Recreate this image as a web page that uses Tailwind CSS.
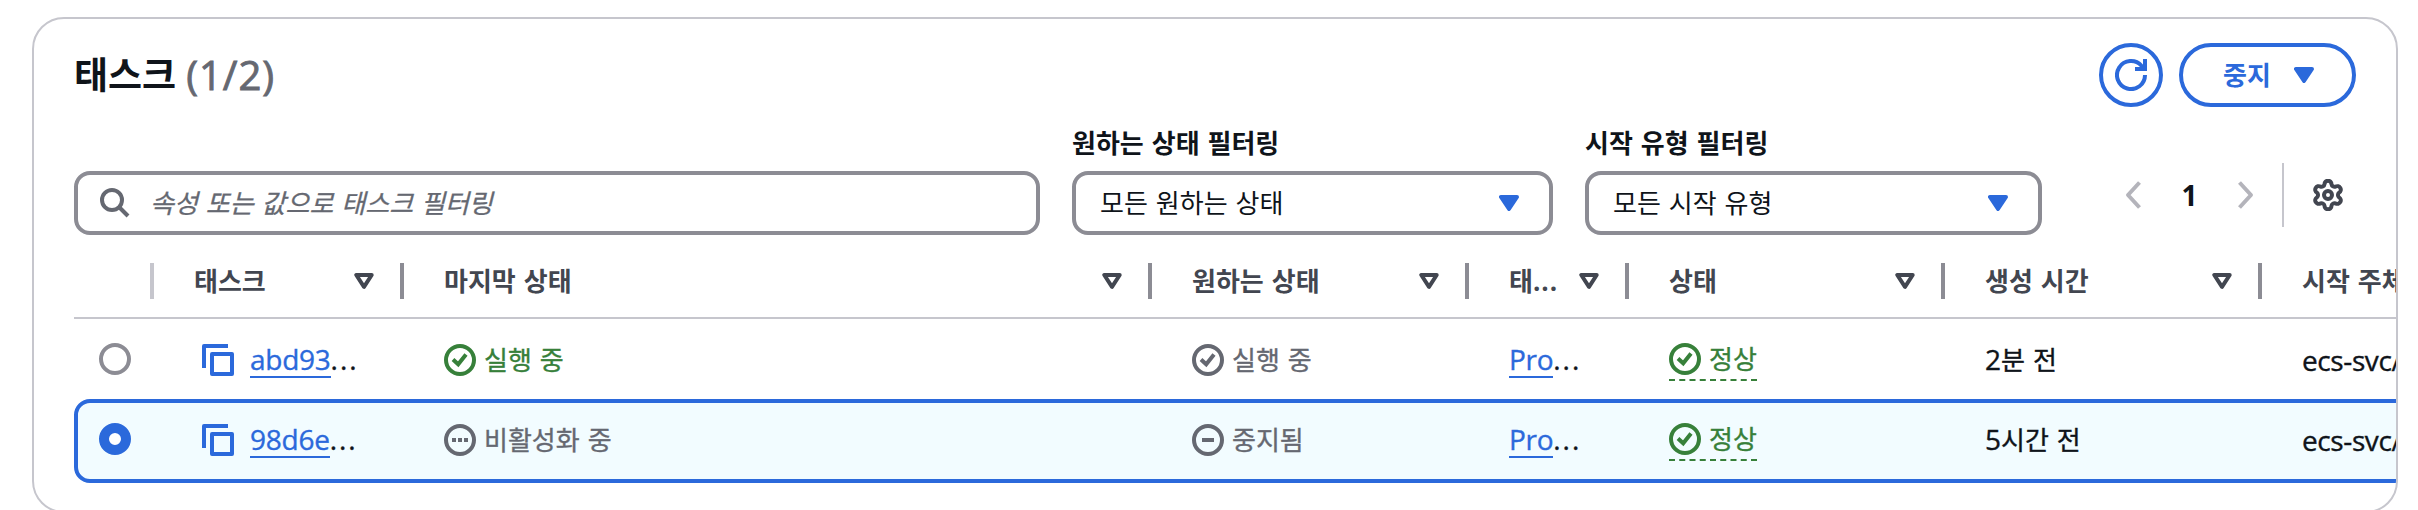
<!DOCTYPE html>
<html lang="ko">
<head>
<meta charset="utf-8">
<title>태스크</title>
<script src="https://cdn.jsdelivr.net/npm/@tailwindcss/browser@4"></script>
</head>
<body class="h-[510px] w-[2418px] overflow-hidden bg-white font-['Open_Sans','Noto_Sans_CJK_KR',sans-serif] text-[26px] leading-8 text-[#0f141a] [word-spacing:1.200px]">
<svg class="hidden">
  <symbol id="check" viewBox="0 0 32 32"><circle cx="16" cy="16" r="14" fill="none" stroke="currentColor" stroke-width="4"/><path d="M9 15.500l5.200 4.800 7.800-9.800" fill="none" stroke="currentColor" stroke-width="4"/></symbol>
  <symbol id="minus" viewBox="0 0 32 32"><circle cx="16" cy="16" r="14" fill="none" stroke="currentColor" stroke-width="4"/><path d="M10 16h12" stroke="currentColor" stroke-width="4"/></symbol>
  <symbol id="dots" viewBox="0 0 32 32"><circle cx="16" cy="16" r="14" fill="none" stroke="currentColor" stroke-width="4"/><path d="M8 14h4v4H8zM14 14h4v4h-4zM20 14h4v4h-4z" fill="currentColor"/></symbol>
  <symbol id="copy" viewBox="0 0 32 32"><path d="M2 24V2h24" fill="none" stroke="currentColor" stroke-width="4" stroke-linejoin="round"/><path d="M10 10h20v20H10z" fill="none" stroke="currentColor" stroke-width="4" stroke-linejoin="round"/></symbol>
  <symbol id="caret" viewBox="0 0 20 16"><path d="M2 2h16l-8 12z" fill="currentColor" stroke="currentColor" stroke-width="4" stroke-linejoin="round"/></symbol>
  <symbol id="sort" viewBox="0 0 20 16"><path d="M2.300 2h15.400L10 13.800z" fill="none" stroke="currentColor" stroke-width="4" stroke-linejoin="round"/></symbol>
</svg>
<main class="mt-[17px] ml-8 h-[496px] w-[2366px] overflow-hidden rounded-[32px] border-2 border-[#c6c6cd] pl-10">
  <header class="flex h-[112px] items-start justify-between pt-6 pr-10">
    <h2 class="flex h-16 items-center gap-[10px] text-[40px] text-[#656871]"><span class="text-[37px] font-bold text-[#0f141a]">태스크</span><span class="tracking-[1px] [-webkit-text-stroke:0.900px]">(1/2)</span></h2>
    <div class="flex gap-4 text-[#2b69db]">
      <button class="flex size-16 items-center justify-center rounded-full border-4 border-current">
        <svg class="size-8" viewBox="0 0 32 32" fill="none" stroke="currentColor" stroke-width="4"><path d="M30 16a14 14 0 1 1-3.500-9.200l3 3.200"/><path d="M30 0v10H20"/></svg>
      </button>
      <button class="flex h-16 w-[177px] items-center rounded-full border-4 border-current pl-[40px] font-bold"><span class="w-[71px] text-left">중지</span><svg class="h-4 w-5"><use href="#caret"/></svg></button>
    </div>
  </header>

  <div class="flex h-[121px] items-start pr-10">
    <div class="mt-10 flex h-16 w-[966px] items-center rounded-2xl border-4 border-[#8c8c94] pl-[22px] text-[#656871]">
      <svg class="h-[30px] w-[30px]" viewBox="0 0 30 30" fill="none" stroke="currentColor" stroke-width="4"><circle cx="12" cy="12" r="10"/><path d="M19 19l9 9"/></svg>
      <span class="ml-5 italic [-webkit-text-stroke:0.300px]">속성 또는 값으로 태스크 필터링</span>
    </div>
    <div class="ml-8 w-[481px]">
      <div class="-mt-1 mb-3 font-bold">원하는 상태 필터링</div>
      <div class="flex h-16 items-center justify-between rounded-2xl border-4 border-[#8c8c94] pr-[30px] pl-6"><span>모든 원하는 상태</span><svg class="h-4 w-5 text-[#2b69db]"><use href="#caret"/></svg></div>
    </div>
    <div class="ml-8 w-[457px]">
      <div class="-mt-1 mb-3 font-bold">시작 유형 필터링</div>
      <div class="flex h-16 items-center justify-between rounded-2xl border-4 border-[#8c8c94] pr-[30px] pl-6"><span>모든 시작 유형</span><svg class="h-4 w-5 text-[#2b69db]"><use href="#caret"/></svg></div>
    </div>
    <div class="mt-8 ml-[83px] flex h-16 items-center">
      <svg class="h-7 w-4 text-[#b4b4bb]" viewBox="0 0 16 28" fill="none" stroke="currentColor" stroke-width="4"><path d="M14.500 1.500L3 14l11.500 12.500" stroke-linejoin="round"/></svg>
      <span class="w-[97px] text-center text-[28px] font-bold">1</span>
      <svg class="h-7 w-4 text-[#b4b4bb]" viewBox="0 0 16 28" fill="none" stroke="currentColor" stroke-width="4"><path d="M1.500 1.500L13 14 1.500 26.500" stroke-linejoin="round"/></svg>
      <span class="ml-7 h-16 w-0.5 bg-[#c6c6cd]"></span>
      <svg class="ml-7 size-8 text-[#424650]" viewBox="0 0 32 32" fill="none" stroke="currentColor" stroke-width="4" stroke-linejoin="round"><circle cx="16" cy="16" r="4"/><path d="M12.500 5.200A3.500 3.500 0 0 1 19.500 5.200A3 3 0 0 0 23.600 7.570A3.500 3.500 0 0 1 27.100 13.630A3 3 0 0 0 27.100 18.370A3.500 3.500 0 0 1 23.600 24.430A3 3 0 0 0 19.500 26.800A3.500 3.500 0 0 1 12.500 26.800A3 3 0 0 0 8.400 24.430A3.500 3.500 0 0 1 4.900 18.370A3 3 0 0 0 4.900 13.630A3.500 3.500 0 0 1 8.400 7.570A3 3 0 0 0 12.500 5.200z"/></svg>
    </div>
  </div>

  <div class="w-[2360px]">
    <div class="grid h-[67px] grid-cols-[80px_250px_748px_317px_160px_316px_317px_172px] items-start border-b-2 border-[#c6c6cd] pt-[11px] font-bold text-[#424650]">
      <div class="h-9 border-r-4 border-[#c6c6cd]"></div>
      <div class="flex h-9 items-center justify-between border-r-4 border-[#8c8c94] pr-[26px] pl-10"><span>태스크</span><svg class="h-4 w-5"><use href="#sort"/></svg></div>
      <div class="flex h-9 items-center justify-between border-r-4 border-[#8c8c94] pr-[26px] pl-10"><span>마지막 상태</span><svg class="h-4 w-5"><use href="#sort"/></svg></div>
      <div class="flex h-9 items-center justify-between border-r-4 border-[#8c8c94] pr-[26px] pl-10"><span>원하는 상태</span><svg class="h-4 w-5"><use href="#sort"/></svg></div>
      <div class="flex h-9 items-center justify-between border-r-4 border-[#8c8c94] pr-[26px] pl-10"><span>태<span class="tracking-[1px]">...</span></span><svg class="h-4 w-5"><use href="#sort"/></svg></div>
      <div class="flex h-9 items-center justify-between border-r-4 border-[#8c8c94] pr-[26px] pl-10"><span>상태</span><svg class="h-4 w-5"><use href="#sort"/></svg></div>
      <div class="flex h-9 items-center justify-between border-r-4 border-[#8c8c94] pr-[26px] pl-10"><span>생성 시간</span><svg class="h-4 w-5"><use href="#sort"/></svg></div>
      <div class="flex h-9 items-center pl-10 whitespace-nowrap"><span>시작 주체</span></div>
    </div>

    <div class="grid h-20 grid-cols-[80px_250px_748px_317px_160px_316px_317px_172px] items-center [-webkit-text-stroke:0.350px]">
      <div class="pl-[25px]"><div class="size-8 rounded-full border-4 border-[#8c8c94] bg-white"></div></div>
      <div class="flex items-center pt-0.5 pl-12 text-[28px]"><svg class="mr-4 size-8 text-[#2b69db]"><use href="#copy"/></svg><span class="h-[35px] border-b-2 border-[#2b69db] tracking-[-0.250px] text-[#2b69db]">abd93</span><span class="h-[35px] tracking-[2px]">...</span></div>
      <div class="flex items-center gap-2 pt-0.5 pl-10 text-[#37803a]"><svg class="size-8"><use href="#check"/></svg>실행 중</div>
      <div class="flex items-center gap-2 pt-0.5 pl-10 text-[#656871]"><svg class="size-8"><use href="#check"/></svg>실행 중</div>
      <div class="flex pt-0.5 pl-10 text-[28px]"><span class="h-[35px] border-b-2 border-[#2b69db] tracking-[-0.300px] text-[#2b69db]">Pro</span><span class="tracking-[2px]">...</span></div>
      <div class="pl-10"><div class="mt-1.5 flex h-[38px] w-[88px] items-start gap-2 border-b-2 border-dashed border-[#37803a] text-[#37803a]"><svg class="size-8"><use href="#check"/></svg>정상</div></div>
      <div class="pl-10"><span class="text-[28px]">2</span>분 전</div>
      <div class="pt-0.5 pl-10 text-[28px] tracking-[-0.400px]">ecs-svc/</div>
    </div>

    <div class="grid h-[84px] grid-cols-[76px_250px_748px_317px_160px_316px_317px_172px] items-center rounded-l-2xl border-4 border-[#2b69db] bg-[#f2fcff] pb-1 [-webkit-text-stroke:0.350px]">
      <div class="pl-[21px]"><div class="size-8 rounded-full border-[10px] border-[#2b69db] bg-white"></div></div>
      <div class="flex items-center pt-0.5 pl-12 text-[28px]"><svg class="mr-4 size-8 text-[#2b69db]"><use href="#copy"/></svg><span class="h-[35px] border-b-2 border-[#2b69db] tracking-[-0.250px] text-[#2b69db]">98d6e</span><span class="h-[35px] tracking-[2px]">...</span></div>
      <div class="flex items-center gap-2 pt-0.5 pl-10 text-[#656871]"><svg class="size-8"><use href="#dots"/></svg>비활성화 중</div>
      <div class="flex items-center gap-2 pt-0.5 pl-10 text-[#656871]"><svg class="size-8"><use href="#minus"/></svg>중지됨</div>
      <div class="flex pt-0.5 pl-10 text-[28px]"><span class="h-[35px] border-b-2 border-[#2b69db] tracking-[-0.300px] text-[#2b69db]">Pro</span><span class="tracking-[2px]">...</span></div>
      <div class="pl-10"><div class="mt-1.5 flex h-[38px] w-[88px] items-start gap-2 border-b-2 border-dashed border-[#37803a] text-[#37803a]"><svg class="size-8"><use href="#check"/></svg>정상</div></div>
      <div class="pl-10"><span class="text-[28px]">5</span>시간 전</div>
      <div class="pt-0.5 pl-10 text-[28px] tracking-[-0.400px]">ecs-svc/</div>
    </div>
  </div>
</main>
</body>
</html>
